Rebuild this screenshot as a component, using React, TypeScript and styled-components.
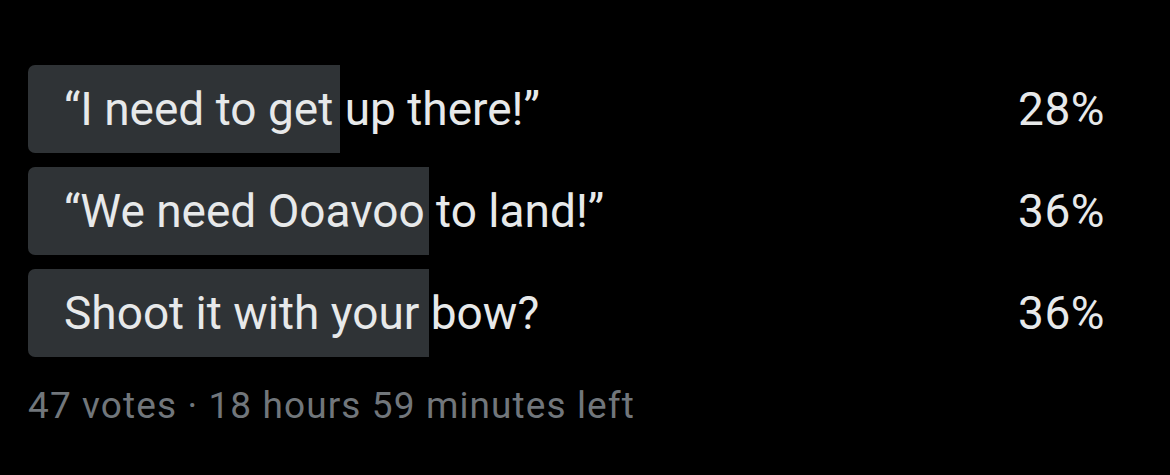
import styled, { createGlobalStyle } from "styled-components";

const GlobalStyle = createGlobalStyle`
  html, body {
    margin: 0;
    padding: 0;
    background: #000;
  }
  body {
    font-family: Roboto, "Liberation Sans", sans-serif;
    -webkit-font-smoothing: antialiased;
  }
`;

type Option = {
  label: string;
  percent: number;
};

const options: Option[] = [
  { label: "“I need to get up there!”", percent: 28 },
  { label: "“We need Ooavoo to land!”", percent: 36 },
  { label: "Shoot it with your bow?", percent: 36 },
];

const Page = styled.div`
  width: 1170px;
  height: 475px;
  background: #000;
  padding: 65px 0 0 28px;
  box-sizing: border-box;
`;

const Poll = styled.div`
  width: 1114px;
  display: flex;
  flex-direction: column;
  gap: 14px;
`;

const Row = styled.div`
  position: relative;
  height: 88px;
  display: flex;
  align-items: center;
  justify-content: space-between;
  padding: 0 37px 0 36px;
  color: #e7e9ea;
  font-size: 46px;
  line-height: 1;
`;

const Fill = styled.div`
  position: absolute;
  left: 0;
  top: 0;
  bottom: 0;
  background: #2f3336;
  border-radius: 7px 0 0 7px;
`;

const Label = styled.span`
  position: relative;
`;

const Percent = styled.span`
  position: relative;
  letter-spacing: 0.5px;
`;

const Footer = styled.div`
  margin-top: 30px;
  color: #71767b;
  font-size: 37px;
  line-height: 1;
  letter-spacing: 1.1px;
`;

const App = () => {
  return (
    <Page>
      <GlobalStyle />
      <Poll>
        {options.map((o) => (
          <Row key={o.label}>
            <Fill style={{ width: `${o.percent}%` }} />
            <Label>{o.label}</Label>
            <Percent>{o.percent}%</Percent>
          </Row>
        ))}
      </Poll>
      <Footer>47 votes · 18 hours 59 minutes left</Footer>
    </Page>
  );
};

export default App;
